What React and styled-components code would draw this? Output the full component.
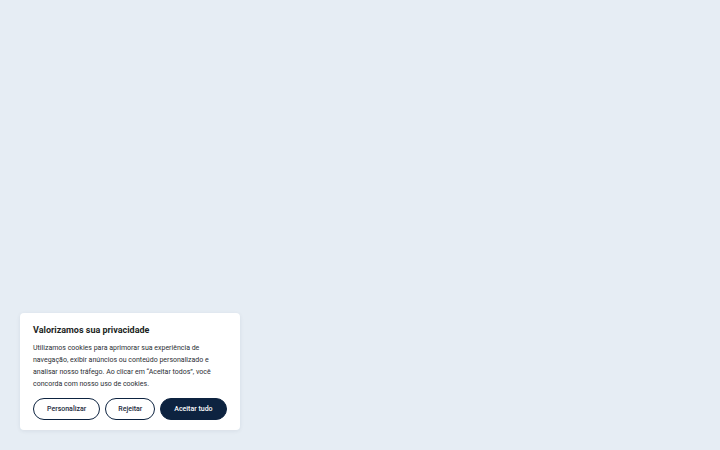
import React from "react";
import styled, { createGlobalStyle } from "styled-components";

const GlobalStyle = createGlobalStyle`
  html, body {
    margin: 0;
    padding: 0;
    background: #e6edf4;
  }
  body {
    font-family: Roboto, "Liberation Sans", sans-serif;
  }
`;

const Page = styled.div`
  width: 720px;
  height: 450px;
  background: #e6edf4;
  display: flex;
  align-items: flex-end;
  padding: 0 0 20px 20px;
  box-sizing: border-box;
`;

const Banner = styled.div`
  width: 220px;
  background: #ffffff;
  border-radius: 4px;
  box-shadow: 0 1px 4px rgba(20, 40, 70, 0.08);
  padding: 10px 13px 10px 13px;
  box-sizing: border-box;
`;

const Title = styled.h2`
  margin: 0 0 5px;
  font-size: 9px;
  font-weight: 700;
  line-height: 14px;
  color: #1c1f24;
`;

const Text = styled.p`
  margin: 0 0 8px;
  font-size: 7px;
  line-height: 12px;
  color: #2a2e34;
`;

const Actions = styled.div`
  display: flex;
  gap: 5px;
`;

const Button = styled.button`
  height: 22px;
  padding: 0 ${(p) => p.$pad}px;
  border-radius: 11px;
  font-family: Roboto, "Liberation Sans", sans-serif;
  font-size: 7px;
  font-weight: 500;
  cursor: pointer;
  border: 1.5px solid #0d2340;
  background: ${(p) => (p.$primary ? "#0d2340" : "#ffffff")};
  color: ${(p) => (p.$primary ? "#ffffff" : "#1c2a3d")};
  white-space: nowrap;
`;

export default function App() {
  return (
    <>
      <GlobalStyle />
      <Page>
        <Banner>
          <Title>Valorizamos sua privacidade</Title>
          <Text>
            Utilizamos cookies para aprimorar sua experiência de navegação,
            exibir anúncios ou conteúdo personalizado e analisar nosso tráfego.
            Ao clicar em “Aceitar todos”, você concorda com nosso uso de cookies.
          </Text>
          <Actions>
            <Button $pad={13}>Personalizar</Button>
            <Button $pad={12}>Rejeitar</Button>
            <Button $pad={13} $primary>Aceitar tudo</Button>
          </Actions>
        </Banner>
      </Page>
    </>
  );
}
